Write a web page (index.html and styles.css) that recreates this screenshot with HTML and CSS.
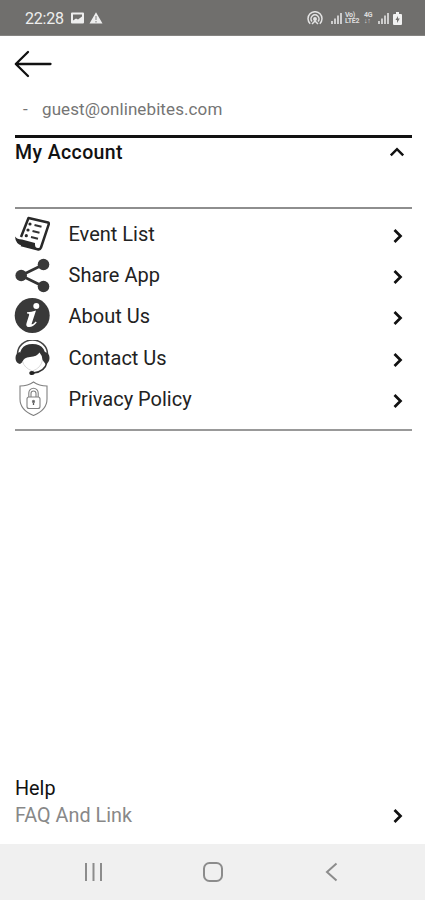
FILE: index.html
```html
<!DOCTYPE html>
<html lang="en">
<head>
<meta charset="utf-8">
<title>My Account</title>
<link rel="stylesheet" href="styles.css">
</head>
<body>
<div class="screen">
  <header class="status">
    <span class="time">22:28</span>
    <svg class="notes" width="32" height="14" viewBox="0 0 32 14"><path fill="#eee" fill-rule="evenodd" d="M1 1.500h11a1 1 0 0 1 1 1v9a1 1 0 0 1-1 1h-11a1 1 0 0 1-1-1v-9a1 1 0 0 1 1-1zM2 3.500v6l3-2 2 1 4-3v-2zM25 1.300l6.500 11.200h-13z"/><path d="M25 5v4M25 10v1.500" stroke="#999" stroke-width="1.300"/></svg>
    <svg class="hotspot" width="16" height="15" viewBox="0 0 16 15" fill="none" stroke="#e4e4e4" stroke-width="1.500"><path d="M3.200 12.800A7 7 0 1 1 12.800 12.800M5 10.500A4 4 0 1 1 11 10.500"/><circle cx="8" cy="8" r="1.200" fill="#e4e4e4"/><path d="M5 13l3-3 3 3"/></svg>
    <svg class="bars" width="11" height="12" viewBox="0 0 11 12"><path d="M1 12V9M4 12V6.500M7 12V3.500M10 12V1" stroke="#ddd" stroke-width="1.700"/></svg>
    <span class="net"><span>Vo)</span><span>LTE2</span></span>
    <span class="net data"><span>4G</span><span>↓↑</span></span>
    <svg class="bars second" width="11" height="12" viewBox="0 0 11 12"><path d="M1 12V9M4 12V6.500M7 12V3.500M10 12V1" stroke="#ddd" stroke-width="1.700"/></svg>
    <svg class="battery" width="9" height="13" viewBox="0 0 9 13"><path d="M3 0h3v2h2q1 0 1 1v9q0 1-1 1H1q-1 0-1-1V3q0-1 1-1h2z" fill="#f1f1f1"/><path d="M5 4L2.500 8H4v3l2.800-4.500H5z" fill="#737270"/></svg>
  </header>
  <main class="content">
    <svg class="back" width="38" height="28" viewBox="0 0 38 28" fill="none" stroke="#111" stroke-width="2.300" stroke-linecap="round" stroke-linejoin="round"><path d="M36.500 14H2M14 2L1.800 14 14 26"/></svg>
    <div class="user"><span class="dash">-</span><span class="email">guest@onlinebites.com</span></div>
    <section class="account">
      <h1 class="title">My Account</h1>
      <svg class="up" width="16" height="10" viewBox="0 0 16 10" fill="none" stroke="#111" stroke-width="2.500"><path d="M1.800 8.300L8 2.200l6.200 6.100"/></svg>
    </section>
    <nav class="menu">
      <a class="row">
        <svg class="icon" viewBox="0 0 36 36"><path d="M7 21L14.500 2 34 6.500Q35.300 7 34.800 8.200L27 31.500Q26 34 23.500 33.200L7 29" fill="#fff" stroke="#292929" stroke-width="2.500" stroke-linejoin="round"/><path d="M1 20.500Q3 23.500 8 23.500L21 27Q20.500 31.500 24 33.800L8 29.500Q1.500 28 1 20.500z" fill="#292929"/><path d="M20.500 9l7 1.800M18.500 15l7 1.800M17 21l7 1.800" stroke="#333" stroke-width="2"/><g fill="#292929"><circle cx="16" cy="8" r="1.600"/><circle cx="14" cy="14" r="1.600"/><circle cx="12.300" cy="19.700" r="1.600"/></g></svg>
        <span class="label">Event List</span><svg class="next" viewBox="0 0 10 16"><path d="M1.500 2L7.500 8l-6 6"/></svg></a>
      <a class="row">
        <svg class="icon" viewBox="0 0 36 36"><path d="M29.500 7.500L7 18.500l22.500 11" fill="none" stroke="#333" stroke-width="2.700"/><g fill="#393939"><circle cx="29.500" cy="7.500" r="5.800"/><circle cx="7.200" cy="18.500" r="5.800"/><circle cx="29.500" cy="29.500" r="5.800"/></g></svg>
        <span class="label">Share App</span><svg class="next" viewBox="0 0 10 16"><path d="M1.500 2L7.500 8l-6 6"/></svg></a>
      <a class="row">
        <svg class="icon" viewBox="0 0 36 36"><circle cx="18.200" cy="17.500" r="17.500" fill="#393939"/><circle cx="22.300" cy="8" r="3" fill="#fff"/><path d="M13 14.200Q17.500 14 22 12.500L17.500 26.200Q18.500 27 21.800 23.500L22.700 24.500Q18.500 29.500 14.500 29 11.500 28.500 12.500 25.200L15.200 16.800Q15.500 15.500 13 15.500z" fill="#fff"/></svg>
        <span class="label">About Us</span><svg class="next" viewBox="0 0 10 16"><path d="M1.500 2L7.500 8l-6 6"/></svg></a>
      <a class="row">
        <svg class="icon" viewBox="0 0 36 36"><path d="M3.500 14A15 14 0 0 1 33.500 14" fill="none" stroke="#444" stroke-width="1.500"/><path d="M33 22Q31 32 19 33" fill="none" stroke="#333" stroke-width="1.500"/><path d="M6 24Q3 4 18.500 4T31.500 24L28.500 20Q28 15 25.500 12.500 23 16.500 16 17 9.500 17.500 8.500 22z" fill="#333"/><path d="M8.500 21Q10 28 18.500 31 27 28 28.500 20" fill="none" stroke="#ccc" stroke-width=".7"/><path d="M6 12v12Q1.500 23 1.500 18T6 12zM31 12v12Q35.500 23 35.500 18T31 12z" fill="#333"/><ellipse cx="18" cy="33" rx="2.700" ry="2.100" fill="#222"/></svg>
        <span class="label">Contact Us</span><svg class="next" viewBox="0 0 10 16"><path d="M1.500 2L7.500 8l-6 6"/></svg></a>
      <a class="row">
        <svg class="icon" viewBox="0 0 36 36" fill="none" stroke="#808080" stroke-width="1.100"><path d="M19.500 1Q14 5 6 5V18Q6 29 19.500 34.500 33 29 33 18V5Q25 5 19.500 1z"/><rect x="13" y="16" width="13" height="11.500" rx="2"/><path d="M14.800 16V12a4.700 4.700 0 0 1 9.400 0v4M17 16V12.500a2.500 2.500 0 0 1 5 0V16"/><path d="M19.500 21v3" stroke="#555" stroke-width="1.300"/><circle cx="19.500" cy="20.500" r="1.100" fill="#555"/></svg>
        <span class="label">Privacy Policy</span><svg class="next" viewBox="0 0 10 16"><path d="M1.500 2L7.500 8l-6 6"/></svg></a>
    </nav>
    <section class="help">
      <h2 class="help-title">Help</h2>
      <a class="faq"><span class="faq-label">FAQ And Link</span><svg class="next" viewBox="0 0 10 16"><path d="M1.500 2L7.500 8l-6 6"/></svg></a>
    </section>
  </main>
  <footer class="navbar">
    <svg width="20" height="20" viewBox="0 0 20 20"><path d="M2 1v18M9.500 1v18M17 1v18"/></svg>
    <svg width="20" height="20" viewBox="0 0 20 20"><rect x="1" y="1" width="18" height="18" rx="5.500"/></svg>
    <svg width="20" height="20" viewBox="0 0 20 20"><path d="M14.500 1.500L5 10l9.500 8.500"/></svg>
  </footer>
</div>
</body>
</html>
```
FILE: styles.css
```css
* { box-sizing: border-box; }
body { margin: 0; background: #fff; font-family: Roboto, "Liberation Sans", sans-serif; }
svg { display: block; flex: none; }
.screen { width: 425px; height: 900px; display: flex; flex-direction: column; overflow: hidden; }
.status { height: 36px; flex: none; background: #706f6d; border-bottom: 1px solid #858482; display: flex; align-items: center; padding: 1px 23px 0 25px; color: #eee; }
.time { font-size: 16px; letter-spacing: -.2px; width: 46px; white-space: nowrap; }
.hotspot { margin-left: auto; }
.bars { margin-left: 8px; }
.net { display: flex; flex-direction: column; width: 15px; margin-left: 3px; font-size: 7px; line-height: 6.500px; font-weight: 700; letter-spacing: -.3px; color: #ddd; }
.data { width: 9px; margin-left: 4px; }
.second { margin-left: 5px; }
.battery { margin-left: 4px; }
.content { flex: 1; display: flex; flex-direction: column; padding: 14px 14px 0 14px; }
.back { flex: none; }
.user { display: flex; margin-top: 19px; padding-left: 9px; height: 24px; line-height: 24px; font-size: 17px; color: #757575; }
.dash { width: 19px; }
.email { letter-spacing: .1px; }
.account { height: 74px; margin: 14px -1px 0 1px; border-top: 3px solid #111; border-bottom: 2px solid #8e8e8e; display: flex; justify-content: space-between; padding: 3px 7px 0 0; }
.title { margin: 0; font-size: 19.500px; line-height: 24px; font-weight: 500; color: #111; letter-spacing: .4px; }
.up { margin-top: 6px; }
.menu { margin: 0 -1px 0 1px; height: 222px; padding-top: 4px; border-bottom: 2px solid #999; display: flex; flex-direction: column; }
.row { display: flex; align-items: center; height: 41.400px; padding-right: 9px; }
.icon { width: 36px; height: 36px; margin-left: -1px; }
.label { margin-left: 18.500px; font-size: 20px; line-height: 24px; color: #222; letter-spacing: 0; }
.next { width: 10px; height: 16px; margin: 4px 0 0 auto; fill: none; stroke: #111; stroke-width: 2.700; }
.help { margin: auto -1px 15px 1px; }
.help-title { margin: 0; font-size: 19.800px; line-height: 27px; font-weight: 400; color: #111; }
.faq { display: flex; align-items: center; height: 27px; padding-right: 9px; }
.faq-label { font-size: 19.800px; color: #888; }
.faq .next { margin-top: 0; }
.navbar { height: 56px; flex: none; background: #f0f0f0; display: flex; justify-content: space-between; align-items: center; padding: 0 83px 0 84px; }
.navbar svg { fill: none; stroke: #8c8c8c; stroke-width: 2; }
```
